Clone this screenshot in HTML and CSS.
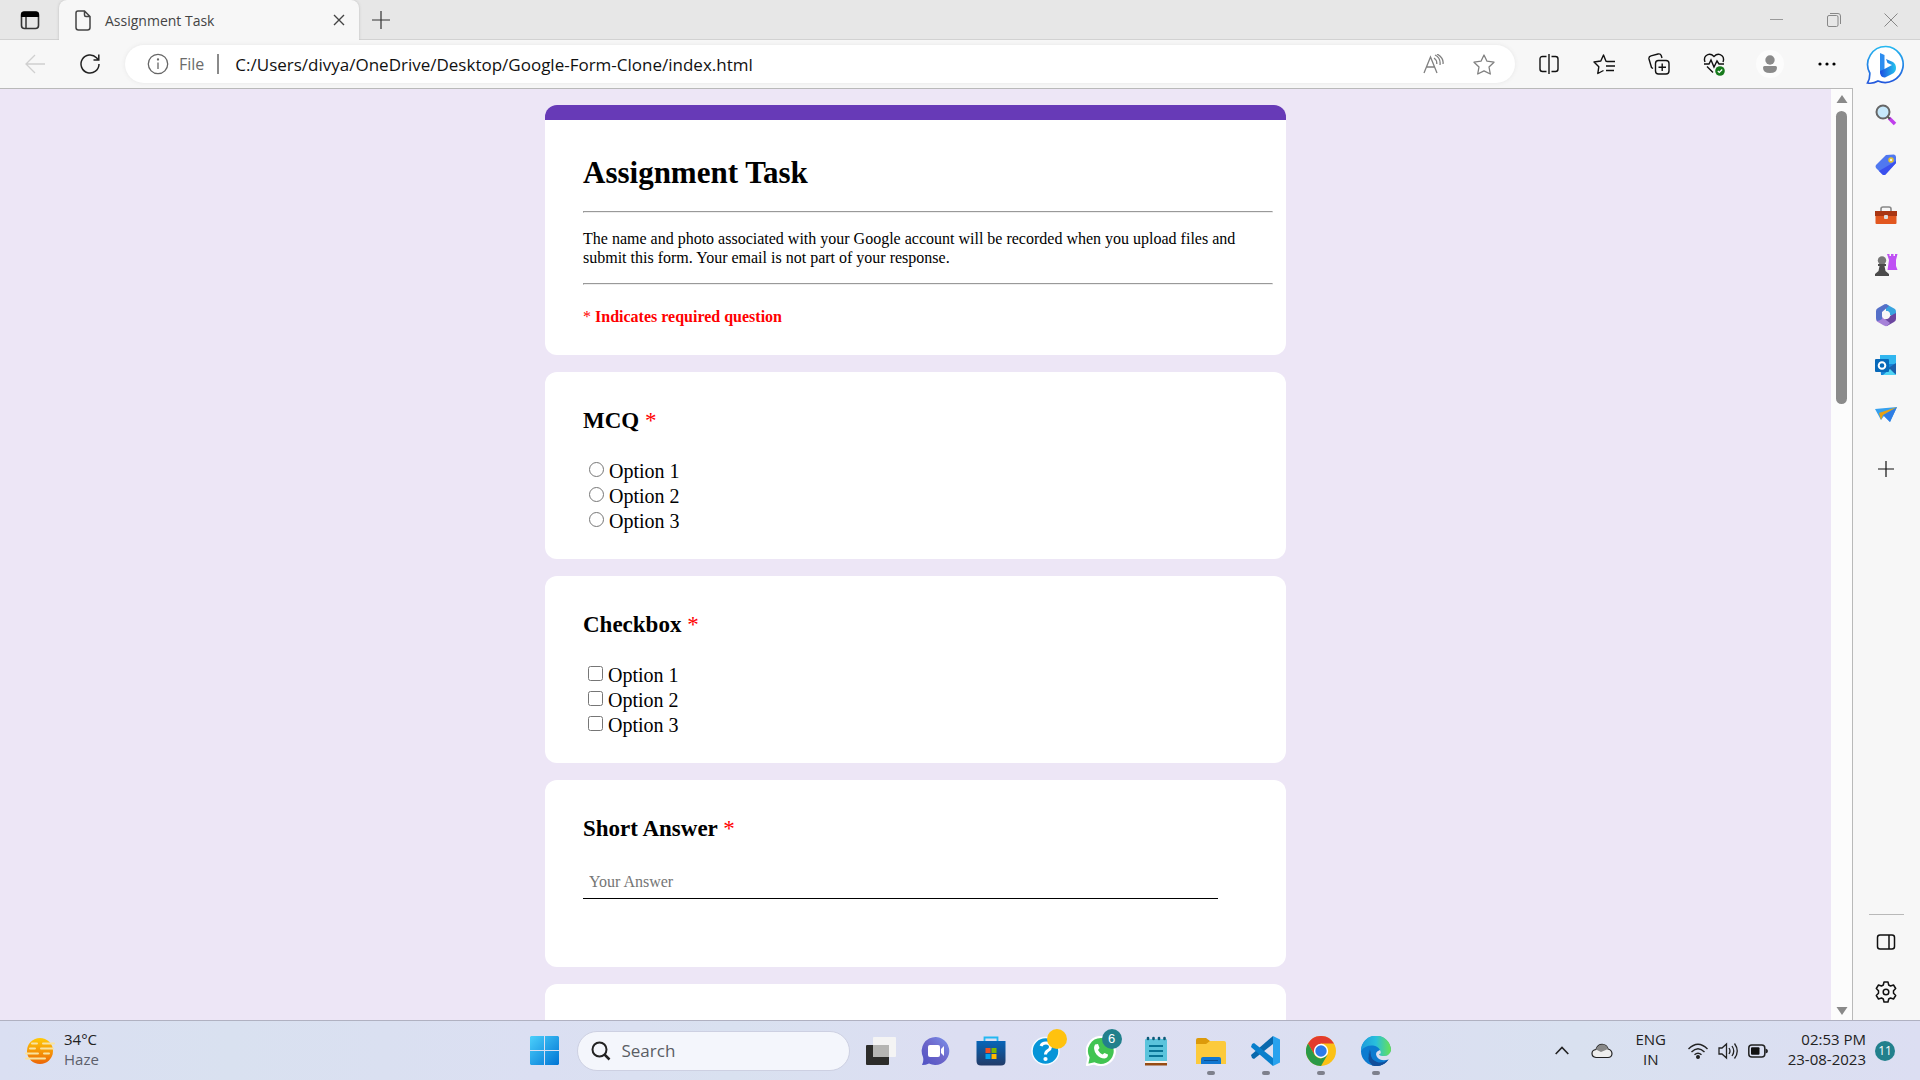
FILE: index.html
```html
<!DOCTYPE html>
<html lang="en">
<head>
<meta charset="utf-8">
<title>Assignment Task</title>
<link rel="stylesheet" href="styles.css">
</head>
<body>
<header class="tabstrip">
  <button class="tab-actions" aria-label="Tab actions"><svg width="20" height="20" viewBox="0 0 20 20"><rect x="1.500" y="2" width="17" height="16.500" rx="3" fill="none" stroke="#333" stroke-width="1.600"/><path d="M1 7V4.500Q1 1.500 4 1.500H16Q19 1.500 19 4.500V7Z" fill="#000"/><path d="M6 7V18" stroke="#333" stroke-width="1.500"/></svg></button>
  <div class="tab">
    <svg width="16" height="21" viewBox="0 0 16 21" fill="none" stroke="#444" stroke-width="1.500"><path d="M3 1H9.500L15 6.500V17.500Q15 20 12.500 20H3.500Q1 20 1 17.500V3Q1 1 3 1ZM9.500 1V5Q9.500 6.500 11 6.500H15"/></svg>
    <span class="tab-title">Assignment Task</span>
    <button aria-label="Close tab"><svg width="12" height="12" viewBox="0 0 12 12" stroke="#444" stroke-width="1.400"><path d="M1 1L11 11M11 1L1 11"/></svg></button>
  </div>
  <button class="new-tab" aria-label="New tab"><svg width="18" height="18" viewBox="0 0 18 18" stroke="#333" stroke-width="1.200"><path d="M9 0V18M0 9H18"/></svg></button>
  <div class="window-controls">
    <button aria-label="Minimize"><svg width="14" height="14" viewBox="0 0 14 14" stroke="#999"><path d="M0 6.500H13"/></svg></button>
    <button aria-label="Restore"><svg width="14" height="14" viewBox="0 0 14 14" fill="none" stroke="#888"><rect x=".5" y="2.500" width="10.500" height="11" rx="1.500"/><path d="M3 .5H11Q13.500 .5 13.500 3V11"/></svg></button>
    <button aria-label="Close"><svg width="14" height="14" viewBox="0 0 14 14" stroke="#888"><path d="M.5 .5L13.500 13.500M13.500 .5L.5 13.500"/></svg></button>
  </div>
</header>

<div class="browser">
  <div class="window">
    <nav class="toolbar">
      <button class="nav-button" aria-label="Back"><svg width="20" height="20" viewBox="0 0 20 20" fill="none" stroke="#d0d0d0" stroke-width="1.300"><path d="M10 1L1 10L10 19M1 10H20"/></svg></button>
      <button class="nav-button" aria-label="Refresh"><svg width="22" height="22" viewBox="0 0 22 22" fill="none" stroke="#222" stroke-width="1.500"><path d="M20 11A9 9 0 1 1 17.500 4.800L19.500 7M19.800 1.500V7H14.500"/></svg></button>
      <div class="address">
        <svg width="22" height="22" viewBox="0 0 22 22" fill="none" stroke="#666" stroke-width="1.300"><circle cx="11" cy="11" r="9.700"/><path d="M11 9.500V16"/><circle cx="11" cy="6.500" r=".5" fill="#666"/></svg>
        <span class="scheme">File</span>
        <input class="url" aria-label="Address" value="C:/Users/divya/OneDrive/Desktop/Google-Form-Clone/index.html">
        <button aria-label="Read aloud"><svg width="21" height="20" viewBox="0 0 21 20" fill="none" stroke="#808080" stroke-width="1.300"><path d="M1 19L7.500 3L14 19M3.500 13H11.500M11 4Q14 6 13.800 10M12 1Q18 4 17 11M14 0Q21 4 20 10"/></svg></button>
        <button aria-label="Add to favorites"><svg width="22" height="21" viewBox="0 0 22 21" fill="none" stroke="#808080" stroke-width="1.300" stroke-linejoin="round"><path d="M11 1L14 7.200L21 8.200L16 13L17.300 20L11 16.800L4.700 20L6 13L1 8.200L8 7.200Z"/></svg></button>
      </div>
      <div class="tools">
        <button aria-label="Split screen"><svg width="20" height="20" viewBox="0 0 20 20" fill="none" stroke="#111" stroke-width="1.400"><path d="M7.500 2.500H3.500Q1 2.500 1 5V15Q1 17.500 3.500 17.500H7.500M12.500 2.500H16.500Q19 2.500 19 5V15Q19 17.500 16.500 17.500H12.500M10 0V20"/></svg></button>
        <button aria-label="Favorites"><svg width="22" height="21" viewBox="0 0 22 21" fill="none" stroke="#111" stroke-width="1.400" stroke-linejoin="round"><path d="M14.500 7.500L13 7.300L10.500 1L7.800 7L1 8L5.800 12.800L4.800 19.500L10.500 16.500M14 7.500H22M13 12H22M13 16.500H21"/></svg></button>
        <button aria-label="Collections"><svg width="22" height="22" viewBox="0 0 22 22" fill="none" stroke="#111" stroke-width="1.400"><rect x="7.500" y="7.500" width="13.500" height="13.500" rx="3"/><path d="M14.200 10.500V18M10.500 14.200H18M5 15.500L3.500 14.500L1 6Q.5 3.500 3 2.800L10 1Q12.500 .5 13.200 2.500L14 5"/></svg></button>
        <button aria-label="Browser essentials"><svg width="22" height="23" viewBox="0 0 22 23" fill="none" stroke="#111" stroke-width="1.400"><path d="M2 9Q.5 5 3 2.800Q7-.5 11 3.500Q15-.5 19 2.800Q21.500 5 20 9M1 11H6L8 7L11 14L14 8L16 11H21M4 13.500L10 19.500"/><circle cx="17" cy="18" r="4.800" fill="#16791b" stroke="none"/><path d="M14.800 18L16.300 19.500L19.200 16.500" stroke="#fff" stroke-width="1.200"/></svg></button>
        <button class="wide" aria-label="Profile"><svg width="28" height="28" viewBox="0 0 28 28"><circle cx="14" cy="14" r="14" fill="#fcfcfc"/><circle cx="14" cy="10" r="4.700" fill="#8a8a8a"/><path d="M7 17.500Q7 16 8.500 16H19.500Q21 16 21 17.500Q21 23 14 23Q7 23 7 17.500Z" fill="#8a8a8a"/></svg></button>
        <button class="wide" aria-label="More"><svg width="18" height="4" viewBox="0 0 18 4"><circle cx="2" cy="2" r="1.600"/><circle cx="9" cy="2" r="1.600"/><circle cx="16" cy="2" r="1.600"/></svg></button>
      </div>
    </nav>

    <div class="viewport">
      <main class="page">
        <form class="form">
          <section class="card intro">
            <h1>Assignment Task</h1>
            <hr>
            <p class="notice">The name and photo associated with your Google account will be recorded when you upload files and submit this form. Your email is not part of your response.</p>
            <hr>
            <p class="required-note"><span class="star">*</span> Indicates required question</p>
          </section>
          <section class="card">
            <h2>MCQ <span class="star">*</span></h2>
            <label class="option"><input type="radio" name="mcq">Option 1</label>
            <label class="option"><input type="radio" name="mcq">Option 2</label>
            <label class="option"><input type="radio" name="mcq">Option 3</label>
          </section>
          <section class="card">
            <h2>Checkbox <span class="star">*</span></h2>
            <label class="option check"><input type="checkbox">Option 1</label>
            <label class="option check"><input type="checkbox">Option 2</label>
            <label class="option check"><input type="checkbox">Option 3</label>
          </section>
          <section class="card">
            <h2><label for="short">Short Answer <span class="star">*</span></label></h2>
            <input class="answer" id="short" type="text" placeholder="Your Answer">
          </section>
          <section class="card"></section>
        </form>
      </main>
      <div class="scrollbar">
        <svg width="12" height="8" viewBox="0 0 12 8"><path d="M6 0L11.500 8H.5Z" fill="#8a8a8a"/></svg>
        <div class="track"><div class="thumb"></div></div>
        <svg width="12" height="8" viewBox="0 0 12 8"><path d="M6 8L11.500 0H.5Z" fill="#8a8a8a"/></svg>
      </div>
    </div>
  </div>

  <aside class="sidebar">
    <button class="bing" aria-label="Bing chat"><svg width="40" height="40" viewBox="0 0 40 40"><defs><linearGradient id="bg1" x1="0" y1="0" x2="0" y2="1"><stop offset="0" stop-color="#26b8f0"/><stop offset="1" stop-color="#2357dc"/></linearGradient><linearGradient id="bg2" x1="0" y1="0" x2="1" y2="0"><stop offset="0" stop-color="#1b4be0"/><stop offset="1" stop-color="#25c5ee"/></linearGradient></defs><path d="M20 1.500A18 18 0 1 1 12 36Q7 39 1.500 38Q4 34 3.800 28A18 18 0 0 1 20 1.500Z" fill="#fff" stroke="url(#bg1)" stroke-width="1.700"/><path d="M14 8L18.500 10V25L14 29Z" fill="#2d8df0"/><path d="M14 26L18.500 24L26 20L21.500 18L20 14L27 17Q30 19 30 23Q30 27 26 29L19 32.500Q14 33 14 26Z" fill="url(#bg2)"/></svg></button>
    <div class="apps">
      <button aria-label="Search"><svg width="22" height="22" viewBox="0 0 22 22"><path d="M14 14L20 20" stroke="#c03fec" stroke-width="3.500"/><path d="M12 12L15 15" stroke="#555" stroke-width="2"/><circle cx="8" cy="8" r="6.500" fill="#c6e8fb" stroke="#666" stroke-width="2"/></svg></button>
      <button aria-label="Shopping"><svg width="22" height="22" viewBox="0 0 22 22"><path d="M11 1L19 .5Q21 1 21 3V9L10.500 20.500Q9 21.500 7.500 20.500L1 14Q0 12 1 11Z" fill="#5078f0"/><path d="M21 7V9L10.500 20.500Q9 21.500 7.500 20.500L4 17Z" fill="#3b50ee"/><circle cx="16" cy="6" r="2" fill="#eee" stroke="#e8c52a" stroke-width="1.500"/></svg></button>
      <button aria-label="Tools"><svg width="24" height="20" viewBox="0 0 24 20"><path d="M7 6V4Q7 2 9 2H15Q17 2 17 4V6" fill="none" stroke="#888" stroke-width="1.600"/><path d="M1 6H23V11H1Z" fill="#a93613"/><path d="M1.500 11H22.500V18Q22.500 19 21.500 19H2.500Q1.500 19 1.500 18Z" fill="#e2571f"/><rect x="10" y="10" width="4" height="4" rx="1" fill="#ddd"/></svg></button>
      <button aria-label="Games"><svg width="24" height="24" viewBox="0 0 24 24"><path d="M13 1H15.500V3H17V1H19.500V3H21V1H23.500L22 7V13L23.500 17H13.500L15 7Z" fill="#bf50f4"/><circle cx="8" cy="7.500" r="4.200" fill="#777"/><path d="M4 11H12V13H10.500L11.500 18L15 21V23H1V21L4.500 18L5.500 13H4Z" fill="#4b4b4b"/></svg></button>
      <button aria-label="Microsoft 365"><svg width="22" height="24" viewBox="0 0 22 24"><path d="M11 1L20 6Q21 7 21 9V15L15 12Q15 8 11 8Z" fill="#39a4df"/><path d="M21 10V16Q21 18 19 19L12 23L7 16Q11 18 15 13Z" fill="#6c46a0"/><path d="M12 23Q10 23.500 8 22L2 18.500Q1 18 1 15L7 11Q7 15 11 17L15 20Z" fill="#a681d8"/><path d="M1 15V8Q1 6 3 5L10 1Q12 1 14 3L7 9V16Q4 18 2 18Z" fill="#5570c8"/><circle cx="11" cy="12" r="4" fill="#f7f7f7"/></svg></button>
      <button aria-label="Outlook"><svg width="22" height="22" viewBox="0 0 22 22"><rect x="5" y="1" width="16" height="10" fill="#31b6ef"/><path d="M5 10H21V20Q21 21 20 21H6Z" fill="#1684d8"/><path d="M12 15L21 9V20Z" fill="#1c5faa"/><path d="M8 21L15 15L21 21Z" fill="#50d5f5"/><rect x="0" y="5" width="14" height="13" rx="1" fill="#0869b9"/><circle cx="7" cy="11.500" r="3.300" fill="none" stroke="#fff" stroke-width="2"/></svg></button>
      <button aria-label="Drop"><svg width="24" height="20" viewBox="0 0 24 20"><path d="M1 4L23 2L16 17L10 11L7 15Z" fill="#36a1ef"/><path d="M23 2L16 17L9 10Z" fill="#2f7de4"/><path d="M23 2L5 8L7 15L9 10Z" fill="#e9a010"/></svg></button>
      <button class="add" aria-label="Customize"><svg width="16" height="16" viewBox="0 0 16 16" stroke="#111" stroke-width="1.200"><path d="M8 0V16M0 8H16"/></svg></button>
    </div>
    <div class="sidebar-foot">
      <button aria-label="Hide sidebar"><svg width="20" height="18" viewBox="0 0 20 18" fill="none" stroke="#111" stroke-width="1.500"><rect x="1.500" y="2" width="17" height="14" rx="2.500"/><path d="M13 2V16"/></svg></button>
      <button aria-label="Settings"><svg width="22" height="22" viewBox="0 0 22 22" fill="none" stroke="#111" stroke-width="1.500" stroke-linejoin="round"><path d="M9 1H13L13.700 4L15.500 5L18.500 4L20.700 7.500L18.500 9.800V12.200L20.700 14.500L18.500 18L15.500 17L13.700 18L13 21H9L8.300 18L6.500 17L3.500 18L1.300 14.500L3.500 12.200V9.800L1.300 7.500L3.500 4L6.500 5L8.300 4Z"/><circle cx="11" cy="11" r="2.800"/></svg></button>
    </div>
  </aside>
</div>

<footer class="taskbar">
  <div class="weather">
    <svg width="30" height="28" viewBox="0 0 30 28"><defs><linearGradient id="sun" x1="0" y1="0" x2="0" y2="1"><stop offset="0" stop-color="#ffca08"/><stop offset="1" stop-color="#ec6608"/></linearGradient></defs><circle cx="15" cy="14" r="13" fill="url(#sun)"/><g stroke="#f8e3a0" stroke-width="2" stroke-linecap="round"><path d="M7 6.500H12M18 6.500H29M16 11.500H28M5 11.500H10M1 16.500H13M19 16.500H24M1 21.500H20"/></g></svg>
    <div class="stack"><span>34°C</span><span class="muted">Haze</span></div>
  </div>

  <div class="dock">
    <button aria-label="Start"><svg width="29" height="29" viewBox="0 0 29 29"><defs><linearGradient id="win" x1="0" y1="0" x2="1" y2="1"><stop offset="0" stop-color="#4bd0fb"/><stop offset="1" stop-color="#0074d4"/></linearGradient></defs><path d="M1 0H14V14H0V1ZM15 0H28L29 1V14H15ZM0 15H14V29H1L0 28ZM15 15H29V28L28 29H15Z" fill="url(#win)"/></svg></button>
    <label class="search">
      <svg width="20" height="20" viewBox="0 0 20 20" fill="none" stroke="#222" stroke-width="2"><circle cx="8.500" cy="8.500" r="7"/><path d="M13.500 13.500L18.500 18.500" stroke-width="2.500"/></svg>
      <input type="text" placeholder="Search" aria-label="Search">
    </label>
    <div class="pinned">
      <button aria-label="Task view"><svg width="30" height="30" viewBox="0 0 30 30"><rect x="0" y="9" width="23" height="20" rx="1" fill="#2c2c2a"/><rect x="7" y="1" width="23" height="20" rx="1" fill="#f4f4f4"/><path d="M7 9H23V21H7Z" fill="#b5b5b3"/></svg></button>
      <button aria-label="Chat"><svg width="30" height="30" viewBox="0 0 30 30"><defs><linearGradient id="chat" x1="1" y1="0" x2="0" y2="1"><stop offset="0" stop-color="#7a93ec"/><stop offset=".5" stop-color="#6d66ca"/><stop offset="1" stop-color="#4f52c4"/></linearGradient></defs><path d="M15 1A14 14 0 1 1 8 27.500Q5 29 1 29Q3 25 2 21A14 14 0 0 1 15 1Z" fill="url(#chat)"/><rect x="7" y="9" width="12" height="12" rx="2" fill="#fff"/><path d="M20 13L23 10V20L20 17Z" fill="#fff"/></svg></button>
      <button aria-label="Store"><svg width="30" height="30" viewBox="0 0 30 30"><defs><linearGradient id="store" x1="0" y1="0" x2="0" y2="1"><stop offset="0" stop-color="#0765b8"/><stop offset="1" stop-color="#223b68"/></linearGradient></defs><path d="M8.500 6V1.500H21.500V6" fill="none" stroke="#24b8f2" stroke-width="1.800"/><path d="M.5 5H29.500V25Q29.500 29.500 25 29.500H5Q.5 29.500 .5 25Z" fill="url(#store)"/><path d="M9.500 12H14.500V17H9.500Z" fill="#f25022"/><path d="M15.500 12H20.500V17H15.500Z" fill="#7fba00"/><path d="M9.500 18H14.500V23H9.500Z" fill="#00a4ef"/><path d="M15.500 18H20.500V23H15.500Z" fill="#ffb900"/></svg></button>
      <button aria-label="Get help"><svg width="30" height="30" viewBox="0 0 30 30"><circle cx="14.500" cy="15" r="13.500" fill="#0695d8" stroke="#f5fbff" stroke-width="1.500"/><path d="M10 10Q11 7 15 7Q19.500 7 19.500 11Q19.500 13 17 14.500Q14.500 16 14.500 18.500" fill="none" stroke="#fff" stroke-width="3"/><circle cx="14.500" cy="23" r="2.100" fill="#fff"/></svg><span class="badge yellow"></span></button>
      <button aria-label="WhatsApp"><svg width="30" height="30" viewBox="0 0 30 30"><path d="M15 1A14 14 0 1 1 8.500 27.500L1 29L2.500 21.500A14 14 0 0 1 15 1Z" fill="#41c452" stroke="#fff" stroke-width="2.200"/><path d="M9 8.500L12 8L13.500 12L12 14Q13.500 17 16.500 18.500L18.500 17L22 18.500Q22 22 18.500 22.500Q14 22.500 10.500 18.500Q6.500 13 9 8.500Z" fill="#fff"/></svg><span class="badge teal">6</span></button>
      <button aria-label="Notepad"><svg width="30" height="30" viewBox="0 0 30 30"><path d="M4 4Q4 3 5 3H25Q26 3 26 4V26H4Z" fill="#5bc4dc"/><g stroke="#0d5a78" stroke-width="2.600" stroke-linecap="round"><path d="M7 2V3M12.500 2V3M18 2V3M23.500 2V3"/></g><path d="M8 10H22M8 15H22M8 20H22" stroke="#087596" stroke-width="1.800"/><path d="M4 25H26V27H4Z" fill="#f6f2ea"/><path d="M4 27H26V29.500H4Z" fill="#964b13"/></svg></button>
      <button class="running" aria-label="File Explorer"><svg width="30" height="30" viewBox="0 0 30 30"><path d="M0 4Q0 2 2 2H10L14 5V9H0Z" fill="#dc9a0a"/><path d="M0 8H10L14 5H28Q30 5 30 7V28H0Z" fill="#fcca3c"/><path d="M5 28V23Q5 21 7 21H23Q25 21 25 23V28Z" fill="#1177d1"/><path d="M8 24.500H22" stroke="#0b4f91"/></svg></button>
      <button class="running" aria-label="Visual Studio Code"><svg width="30" height="30" viewBox="0 0 30 30"><path d="M22 0L29 3.500V26.500L22 30Z" fill="#28a2ee"/><path d="M22 0L0 19L1 22L3 23L22 8Z" fill="#0868ad"/><path d="M22 30L0 11L1 8L3 7L22 22Z" fill="#087fcc"/></svg></button>
      <button class="running" aria-label="Chrome"><svg width="30" height="30" viewBox="0 0 30 30"><circle cx="15" cy="15" r="15" fill="#fbc116"/><path d="M2 7.500A15 15 0 0 1 28 7.500H15L8.500 18.800Z" fill="#e33b2e"/><path d="M2 7.500L8.500 18.800Q11 22.500 15 22.500L21.500 18.800L15 30A15 15 0 0 1 2 7.500Z" fill="#2b9a47"/><circle cx="15" cy="15" r="7.200" fill="#fff"/><circle cx="15" cy="15" r="5.700" fill="#2d7be8"/></svg></button>
      <button class="running" aria-label="Edge"><svg width="30" height="30" viewBox="0 0 30 30"><defs><linearGradient id="edge" x1="0" y1="0" x2="1" y2="0"><stop offset="0" stop-color="#1c9bdc"/><stop offset=".5" stop-color="#29bfdc"/><stop offset="1" stop-color="#68e253"/></linearGradient></defs><circle cx="15" cy="15" r="15" fill="#0c7bd0"/><path d="M9 13Q5 22 13 27Q20 31 27 24A15 15 0 0 1 11 29.500Q7 22 9 13Z" fill="#124f9b"/><path d="M10 14Q8 23 16 26Q22 28 28 23A15 15 0 0 1 15 30Q3 27 10 14Z" fill="#124f9b"/><path d="M0 15A15 15 0 0 1 30 14Q30 20 23.500 20Q18 20 18 18Q19.500 16 19 14Q17 10 12 9.500Q4 9 0 15Z" fill="url(#edge)"/><path d="M19 14Q21 18 18 18Q18 20 23.500 20Q28 20 30 15V22L27.500 23.500Q20 26 16 21Q13 16 19 14Z" fill="#dcdff0"/></svg></button>
    </div>
  </div>

  <div class="tray">
    <svg class="chevron" width="14" height="9" viewBox="0 0 14 9" fill="none" stroke="#222" stroke-width="1.600"><path d="M.7 8L7 1.500L13.300 8"/></svg>
    <svg class="cloud" width="22" height="16" viewBox="0 0 22 16"><path d="M5 14.500Q1 14 1 10.500Q1 7 5 6.500Q7 1 12 1.500Q16 2 17 6Q21 7 21 11Q20.500 14.500 17 14.500Z" fill="#eee" stroke="#222" stroke-width="1.200"/><path d="M5 6.500Q7 1 12 1.500Q16 2 17 6L10 9Z" fill="#888"/></svg>
    <div class="stack lang"><span>ENG</span><span>IN</span></div>
    <div class="status">
      <svg width="20" height="16" viewBox="0 0 20 16" fill="none" stroke="#222" stroke-width="1.400"><path d="M.5 6Q10-3.500 19.500 6M3.500 9Q10 2.500 16.500 9M6.500 11.800Q10 8.500 13.500 11.800"/><circle cx="10" cy="14" r="1.300" fill="#222"/></svg>
      <svg width="20" height="18" viewBox="0 0 20 18" fill="none" stroke="#222" stroke-width="1.300"><path d="M1 6H4L8.500 2V16L4 12H1ZM11 6Q13 9 11 12M14 4Q17.500 9 14 14M16.500 1.500Q22 9 16.500 16.500"/></svg>
      <svg width="20" height="14" viewBox="0 0 20 14"><rect x=".8" y="1" width="16" height="12" rx="3" fill="none" stroke="#222" stroke-width="1.500"/><rect x="3" y="3.200" width="8.500" height="7.600" rx="1" fill="#111"/><path d="M17.500 4.500Q20 5 20 7Q20 9 17.500 9.500Z" fill="#222"/></svg>
    </div>
    <div class="stack clock"><span>02:53 PM</span><span>23-08-2023</span></div>
    <span class="count">11</span>
  </div>
</footer>
</body>
</html>
```
FILE: styles.css
```css
* { box-sizing: border-box; }
body {
  margin: 0;
  height: 100vh;
  display: flex;
  flex-direction: column;
  overflow: hidden;
  font-family: "Open Sans", "Noto Sans", sans-serif;
  font-size: 15px;
  color: #222;
}
svg { display: block; flex: none; }
button {
  display: flex;
  align-items: center;
  justify-content: center;
  padding: 0;
  border: 0;
  background: none;
  position: relative;
}
input { font-family: inherit; }

/* tab strip */
.tabstrip {
  flex: none;
  height: 40px;
  display: flex;
  align-items: stretch;
  background: #e7e7e7;
  box-shadow: inset 0 -1px #d2d2d2;
}
.tab-actions { width: 59px; }
.tab {
  width: 300px;
  display: flex;
  align-items: center;
  gap: 14px;
  padding: 0 14px 0 16px;
  background: #f7f7f7;
  border-radius: 8px 8px 0 0;
  box-shadow: 0 0 3px #bbb;
  clip-path: inset(0 -3px 0 -3px);
}
.tab-title { flex: 1; font-size: 14px; color: #444; }
.new-tab { width: 43px; }
.window-controls { margin-left: auto; padding-right: 1px; display: flex; }
.window-controls button { width: 57px; }

/* browser frame */
.browser { flex: 1; min-height: 0; display: flex; background: #f7f7f7; }
.window { flex: 1; min-width: 0; display: flex; flex-direction: column; }
.toolbar { flex: none; height: 48px; display: flex; align-items: center; padding-left: 7px; }
.nav-button { width: 55px; height: 40px; }
.address {
  flex: 1;
  height: 38px;
  margin: 0 6px 0 8px;
  padding: 0 20px 0 22px;
  display: flex;
  align-items: center;
  gap: 10px;
  border-radius: 19px;
  background: #fff;
  box-shadow: 0 0 4px #e6e6e6;
}
.scheme { color: #6b6b6b; font-size: 16px; padding-right: 13px; border-right: 2px solid #8a8a8a; line-height: 20px; }
.url { flex: 1; border: 0; padding: 0 0 0 6px; font-size: 17px; color: #111; background: none; outline: 0; }
.address button + button { margin-left: 19px; }
.tools { display: flex; }
.tools button { width: 55px; height: 40px; }
.tools .wide { width: 57px; }
.tools { margin-right: -2px; }

/* page and scroll bar */
.viewport {
  flex: 1;
  min-height: 0;
  display: flex;
  border-top: 1px solid #b9b9b9;
  border-right: 1px solid #b9b9b9;
}
.page {
  flex: 1;
  overflow: hidden;
  background: #ede6f6;
  padding-top: 16px;
  font-family: "Liberation Serif", serif;
  color: #000;
}
.form { max-width: 741px; margin: 0 auto; display: flex; flex-direction: column; gap: 17px; }
.card { min-height: 187px; padding: 35px 13px 25px 38px; border-radius: 12px; background: #fff; }
.intro { border-top: 15px solid #673ab7; padding-bottom: 29px; }
h1 { margin: 0 0 20px; font-size: 31px; line-height: 36px; }
hr { margin: 0; border-width: 1px; border-color: #999 #eee #eee #999; border-style: solid; }
.notice { margin: 16px 0; font-size: 16px; line-height: 19px; }
.required-note { margin: 22px 0 0; font-size: 16px; line-height: 19px; font-weight: bold; color: #f00; }
h2 { margin: 0 0 24px; font-size: 23px; line-height: 28px; }
.star { color: #f00; font-weight: normal; }
.option { display: flex; align-items: flex-start; gap: 5px; padding-left: 6px; font-size: 20px; line-height: 25px; }
.check { padding-left: 5px; }
.option input { width: 15px; height: 15px; margin: 3px 0 0; }
.answer {
  display: block;
  width: 92%;
  height: 32px;
  padding: 0 6px 2px;
  border: 0;
  border-bottom: 1px solid #000;
  font-size: 16px;
}
.answer::placeholder { color: #757575; }
.scrollbar {
  width: 21px;
  padding: 6px 0 5px;
  display: flex;
  flex-direction: column;
  align-items: center;
  background: #fcfcfc;
}
.track { flex: 1; padding: 8px 0; }
.thumb { width: 11px; height: 33%; border-radius: 6px; background: #8b8b8b; }

/* sidebar */
.sidebar { width: 67px; padding-right: 1px; display: flex; flex-direction: column; align-items: center; }
.bing { height: 50px; }
.apps button { width: 40px; height: 50px; }
.apps .add { height: 58px; }
.sidebar-foot { margin-top: auto; border-top: 1px solid #b9b9b9; padding-top: 2px; }
.sidebar-foot button { width: 35px; height: 50px; }
.sidebar-foot button + button { margin-bottom: 3px; }

/* taskbar */
.taskbar {
  flex: none;
  height: 60px;
  display: grid;
  grid-template-columns: 1fr auto 1fr;
  align-items: center;
  border-top: 1px solid #b0b1c1;
  background: linear-gradient(90deg, #dadff2, #d9e1f0 12%, #dbdff2 28%, #d9e1f0 38%, #dcdef2 50%, #dbdff1 72%, #d9e1f0 82%, #dcdef2);
}
.stack { display: flex; flex-direction: column; padding-bottom: 3px; line-height: 20px; font-size: 15px; }
.muted { color: #5c5f6b; }
.weather { display: flex; align-items: center; gap: 9px; padding-left: 25px; }
.dock { display: flex; align-items: center; }
.search {
  width: 273px;
  height: 40px;
  margin: 0 16px 0 18px;
  padding: 0 13px;
  display: flex;
  align-items: center;
  gap: 11px;
  border: 1px solid #cdd0e2;
  border-radius: 20px;
  background: #f4f6fc;
}
.search input { width: 100%; border: 0; padding: 0; background: none; font-size: 17px; }
.search input::placeholder { color: #5a5d64; }
.pinned { display: flex; gap: 25px; }
.pinned button { width: 30px; height: 30px; }
.running::after {
  content: "";
  position: absolute;
  left: 11px;
  bottom: -9px;
  width: 8px;
  height: 4px;
  border-radius: 2px;
  background: #7e808c;
}
.badge {
  position: absolute;
  top: -7px;
  right: -6px;
  width: 20px;
  height: 20px;
  border-radius: 50%;
  font-size: 13px;
  line-height: 20px;
  color: #fff;
}
.yellow { background: #ffc20e; }
.teal { background: #22808c; }
.tray { display: flex; align-items: center; justify-content: flex-end; padding-right: 25px; }
.chevron { margin-right: 22px; }
.cloud { margin-right: 22px; }
.lang { align-items: center; margin-right: 22px; }
.status { display: flex; align-items: center; gap: 10px; margin-right: 20px; }
.clock { align-items: flex-end; width: 78px; white-space: nowrap; }
.count {
  width: 20px;
  height: 20px;
  margin-left: 9px;
  border-radius: 50%;
  background: #22808c;
  color: #fff;
  font-size: 12px;
  line-height: 20px;
  text-align: center;
}
```
